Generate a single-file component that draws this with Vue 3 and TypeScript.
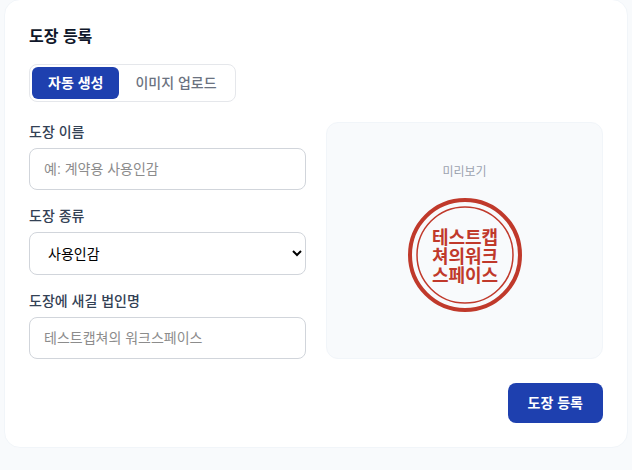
<script setup lang="ts">
import { computed, ref } from 'vue'

type Mode = 'auto' | 'upload'

const tabs: { id: Mode; label: string }[] = [
  { id: 'auto', label: '자동 생성' },
  { id: 'upload', label: '이미지 업로드' },
]
const kinds: string[] = ['사용인감', '법인인감', '계약용 인감']
const workspace = '테스트캡쳐의 워크스페이스'

const mode = ref<Mode>('auto')
const sealName = ref('')
const kind = ref(kinds[0])
const corpName = ref('')

// The seal text is engraved without spaces, four characters to a line.
const sealLines = computed<string[]>(() => {
  const chars = Array.from((corpName.value || workspace).replace(/\s/g, ''))
  const lines: string[] = []
  for (let i = 0; i < chars.length; i += 4) lines.push(chars.slice(i, i + 4).join(''))
  return lines
})

const lineHeight = 19
const lineY = (i: number): number => 72 + (i - (sealLines.value.length - 1) / 2) * lineHeight
</script>

<template>
  <main class="page">
    <form class="card" @submit.prevent>
      <h2 class="title">도장 등록</h2>

      <div class="tabs">
        <button
          v-for="tab in tabs"
          :key="tab.id"
          type="button"
          class="tab"
          :class="{ active: mode === tab.id }"
          :aria-pressed="mode === tab.id"
          @click="mode = tab.id"
        >
          {{ tab.label }}
        </button>
      </div>

      <div class="columns">
        <div class="fields">
          <div class="field">
            <label for="seal-name">도장 이름</label>
            <input id="seal-name" v-model="sealName" class="control" type="text" placeholder="예: 계약용 사용인감" />
          </div>
          <div class="field">
            <label for="seal-kind">도장 종류</label>
            <select id="seal-kind" v-model="kind" class="control select">
              <option v-for="item in kinds" :key="item">{{ item }}</option>
            </select>
          </div>
          <div class="field">
            <label for="corp-name">도장에 새길 법인명</label>
            <input id="corp-name" v-model="corpName" class="control" type="text" :placeholder="workspace" />
          </div>
        </div>

        <div class="preview">
          <p class="caption">미리보기</p>
          <svg class="seal" viewBox="0 0 128 128" width="128" height="128">
            <circle cx="64" cy="64" r="55" fill="none" stroke="#c0392b" stroke-width="4" />
            <circle cx="64" cy="64" r="48" fill="none" stroke="#c0392b" stroke-width="1.5" />
            <text v-for="(line, i) in sealLines" :key="i" x="64" :y="lineY(i)" class="engraving">{{ line }}</text>
          </svg>
        </div>
      </div>

      <div class="actions">
        <button type="submit" class="submit">도장 등록</button>
      </div>
    </form>
  </main>
</template>

<style>
body {
  margin: 0;
  background: #f8fafc;
}
</style>

<style scoped>
.page {
  display: flow-root;
  padding: 0 4px;
  font-family: "Liberation Sans", "Noto Sans CJK KR", sans-serif;
  font-size: 14px;
  line-height: 20px;
}

.card {
  margin: -1px 0 22px;
  padding: 24px;
  background: #fff;
  border: 1px solid #f1f5f9;
  border-radius: 16px;
}

.title {
  margin: 0 0 14px;
  color: #0f172a;
  font-size: 16px;
  font-weight: 700;
  line-height: 26px;
}

.tabs {
  display: flex;
  width: fit-content;
  margin-bottom: 20px;
  padding: 2px;
  border: 1px solid #e5e7eb;
  border-radius: 8px;
}

.tab {
  padding: 6px 16px;
  border: 0;
  border-radius: 6px;
  background: transparent;
  color: #6b7280;
  font: inherit;
  font-weight: 500;
  cursor: pointer;
}

.tab.active {
  background: #1e40af;
  color: #fff;
  font-weight: 700;
}

.columns {
  display: grid;
  grid-template-columns: 1fr 1fr;
  gap: 20px;
}

.fields {
  display: flex;
  flex-direction: column;
  gap: 16px;
}

.field {
  display: flex;
  flex-direction: column;
  gap: 6px;
}

.field label {
  color: #334155;
  font-weight: 500;
}

.control {
  box-sizing: border-box;
  width: 100%;
  height: 42px;
  padding: 0 14px;
  border: 1px solid #d1d5db;
  border-radius: 8px;
  background: #fff;
  color: #000;
  font: inherit;
}

.control::placeholder {
  color: #8c8c8c;
}

.select {
  height: 43px;
}

.preview {
  display: flex;
  flex-direction: column;
  align-items: center;
  justify-content: center;
  gap: 10px;
  border: 1px solid #f1f5f9;
  border-radius: 12px;
  background: #f8fafc;
}

.caption {
  margin: 0;
  color: #9ca3af;
  font-size: 12px;
  line-height: 18px;
}

.seal {
  display: block;
}

.engraving {
  fill: #c0392b;
  font-size: 18px;
  font-weight: 700;
  text-anchor: middle;
}

.actions {
  display: flex;
  justify-content: flex-end;
  margin-top: 24px;
}

.submit {
  padding: 10px 20px;
  border: 0;
  border-radius: 8px;
  background: #1e40af;
  color: #fff;
  font: inherit;
  font-weight: 700;
  cursor: pointer;
}
</style>
